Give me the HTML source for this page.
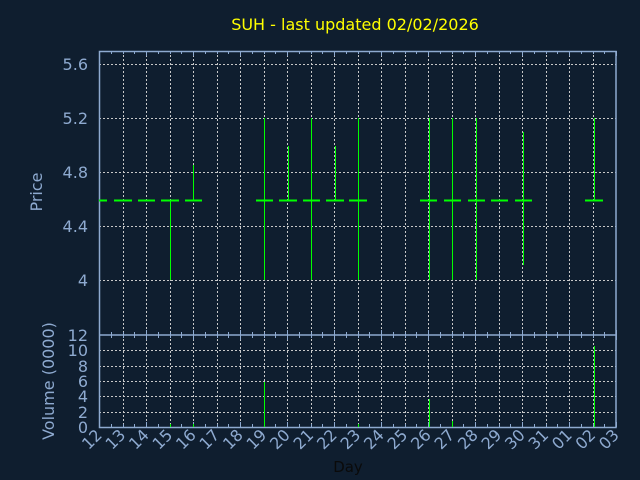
<!DOCTYPE html>
<html><head><meta charset="utf-8"><style>
html,body{margin:0;padding:0;background:#0f1e2f;}
svg{display:block;font-family:"DejaVu Sans","Liberation Sans",sans-serif;}
</style></head><body>
<svg width="640" height="480" viewBox="0 0 640 480" xmlns="http://www.w3.org/2000/svg">
<rect width="640" height="480" fill="#0f1e2f"/>
<text x="355" y="30" text-anchor="middle" font-size="16" fill="#ffff00">SUH - last updated 02/02/2026</text>
<g stroke="#c8c8c8" stroke-width="1" stroke-dasharray="2,2" fill="none">
<path d="M99 64.5H616M99 118.5H616M99 172.5H616M99 226.5H616M99 280.5H616"/>
<path d="M99 350.5H616M99 366.5H616M99 381.5H616M99 396.5H616M99 412.5H616"/>
<path d="M123.5 51V427M146.5 51V427M170.5 51V427M193.5 51V427M217.5 51V427M240.5 51V427M264.5 51V427M287.5 51V427M311.5 51V427M334.5 51V427M358.5 51V427M381.5 51V427M405.5 51V427M428.5 51V427M452.5 51V427M475.5 51V427M499.5 51V427M522.5 51V427M546.5 51V427M569.5 51V427M593.5 51V427"/>
</g>
<g stroke="#8eaad0" stroke-width="1.5" fill="none">
<rect x="99.5" y="51.5" width="516.5" height="376"/>
<path d="M99 335H616"/>
</g>
<g stroke="#8eaad0" stroke-width="1" id="ticks"></g>
<g fill="#8eaad0" font-size="16" text-anchor="end">
<text x="88" y="70">5.6</text><text x="88" y="124">5.2</text><text x="88" y="178">4.8</text><text x="88" y="232">4.4</text><text x="88" y="286">4</text>
<text x="88" y="341">12</text><text x="88" y="356">10</text><text x="88" y="372">8</text><text x="88" y="387">6</text><text x="88" y="402">4</text><text x="88" y="418">2</text><text x="88" y="433">0</text>
</g>
<text transform="translate(42,192) rotate(-90)" text-anchor="middle" font-size="16" fill="#8eaad0">Price</text>
<text transform="translate(54,381) rotate(-90)" text-anchor="middle" font-size="16" fill="#8eaad0">Volume (0000)</text>
<text x="348" y="472" text-anchor="middle" font-size="15" fill="#0a0a0a">Day</text>
<g fill="#8eaad0" font-size="16" text-anchor="end" id="days"></g>
<g stroke="#00ff00" fill="none">
<path stroke-width="2" d="M99 200.5H107M114 200.5H132M138 200.5H155M161 200.5H179M185 200.5H202M256 200.5H273M279 200.5H297M303 200.5H320M326 200.5H344M349 200.5H367M420 200.5H437M444 200.5H461M468 200.5H485M491 200.5H508M515 200.5H532M585 200.5H603"/>
<path stroke-width="1" d="M170.5 200V280M193.5 165V200M264.5 118V280M288.5 146V200M311.5 118V280M335.5 146V200M358.5 118V280M429.5 118V280M452.5 118V280M476.5 118V280M523.5 132V265M594.5 118V200"/>
<path stroke-width="1" d="M264.5 382V427M170.5 424V427M193.5 424V427M358.5 424V427M429.5 399V427M452.5 421V427M594.5 346V427"/>
</g>
<script>
var t=document.getElementById('ticks'),s='';
for(var i=0;i<=44;i++){var x=Math.round(99+i*11.75)+0.5;var l=(i%4==0)?5:3;s+='M'+x+' 51v'+l+'M'+x+' 335v-'+l+'M'+x+' 335v'+l+'M'+x+' 427v-'+l;}
var p=document.createElementNS('http://www.w3.org/2000/svg','path');p.setAttribute('d',s);t.appendChild(p);
var d=document.getElementById('days');var labs=['12','13','14','15','16','17','18','19','20','21','22','23','24','25','26','27','28','29','30','31','01','02','03'];
labs.forEach(function(a,i){var x=99+i*23.5+4;var e=document.createElementNS('http://www.w3.org/2000/svg','text');e.setAttribute('transform','translate('+x+',436) rotate(-45)');e.textContent=a;d.appendChild(e);});
</script>
</svg>
</body></html>
